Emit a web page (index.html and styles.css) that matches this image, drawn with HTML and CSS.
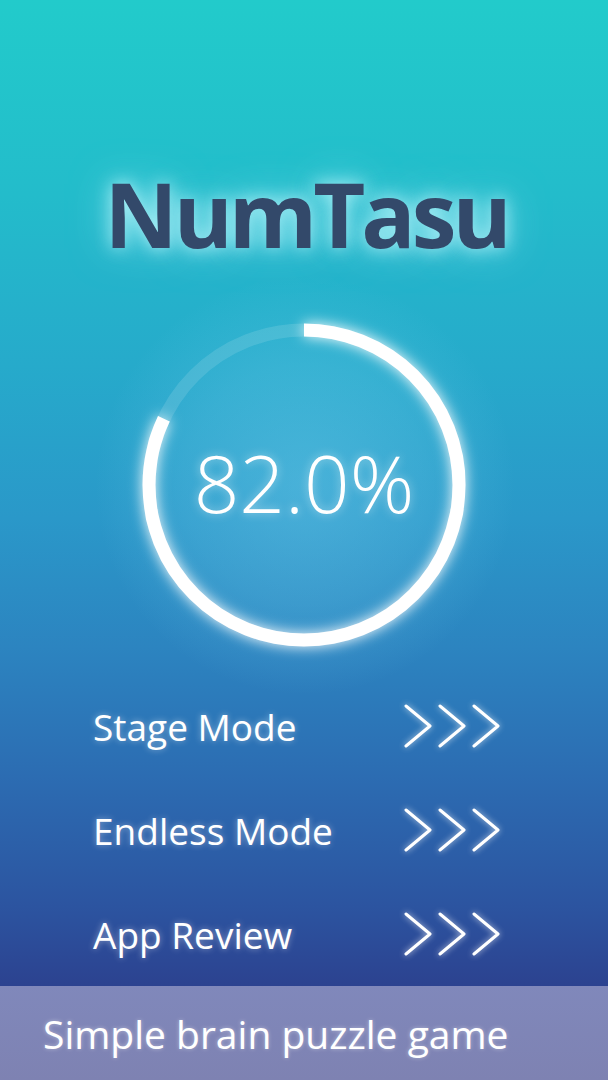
FILE: index.html
```html
<!DOCTYPE html>
<html lang="en">
<head>
<meta charset="utf-8">
<title>NumTasu</title>
<link rel="stylesheet" href="styles.css">
</head>
<body>
<div class="screen">
  <header class="title-wrap">
    <h1 class="title">NumTasu</h1>
  </header>
  <section class="gauge">
    <svg class="ring" viewBox="0 0 340 340" width="340" height="340" aria-hidden="true">
      <defs>
        <filter id="glow" x="-20%" y="-20%" width="140%" height="140%">
          <feGaussianBlur stdDeviation="7" result="b"/>
          <feMerge><feMergeNode in="b"/><feMergeNode in="SourceGraphic"/></feMerge>
        </filter>
      </defs>
      <circle class="track" cx="170" cy="170" r="155"/>
      <circle class="progress" cx="170" cy="170" r="155" filter="url(#glow)"
        stroke-dasharray="798.6 973.9" transform="rotate(-90 170 170)"/>
    </svg>
    <div class="pct">82.0%</div>
  </section>
  <nav class="menu">
    <a class="item" href="#">
      <span class="label">Stage Mode</span>
      <svg class="chev" viewBox="0 0 98 46" width="98" height="46" aria-hidden="true">
        <polyline points="3,3 27,23 3,43"/><polyline points="37,3 61,23 37,43"/><polyline points="71,3 95,23 71,43"/>
      </svg>
    </a>
    <a class="item" href="#">
      <span class="label">Endless Mode</span>
      <svg class="chev" viewBox="0 0 98 46" width="98" height="46" aria-hidden="true">
        <polyline points="3,3 27,23 3,43"/><polyline points="37,3 61,23 37,43"/><polyline points="71,3 95,23 71,43"/>
      </svg>
    </a>
    <a class="item" href="#">
      <span class="label">App Review</span>
      <svg class="chev" viewBox="0 0 98 46" width="98" height="46" aria-hidden="true">
        <polyline points="3,3 27,23 3,43"/><polyline points="37,3 61,23 37,43"/><polyline points="71,3 95,23 71,43"/>
      </svg>
    </a>
  </nav>
  <footer class="tagline">Simple brain puzzle game</footer>
</div>
</body>
</html>
```

FILE: styles.css
```css
* { box-sizing: border-box; }
html, body { margin: 0; padding: 0; }
body {
  width: 608px;
  height: 1080px;
  overflow: hidden;
  font-family: "Open Sans", "Noto Sans", sans-serif;
}
.screen {
  width: 608px;
  height: 1080px;
  display: flex;
  flex-direction: column;
  background:
    radial-gradient(circle at 305px 485px, rgba(120, 210, 240, 0.4) 0, rgba(120, 210, 240, 0.22) 120px, rgba(120, 210, 240, 0) 210px),
    linear-gradient(180deg, #22cbcb 0%, #23bccb 18%, #26aacb 34%, #2a98c9 48%, #2c84c0 60%, #2c6cb2 72%, #2c54a0 84%, #2c3e8c 93%, #2c3886 100%);
}
.title-wrap {
  padding-top: 167px;
  display: flex;
  justify-content: center;
}
.title {
  margin: 0;
  font-family: "Open Sans", sans-serif;
  font-weight: 700;
  font-size: 90px;
  line-height: 92px;
  letter-spacing: -4px;
  padding-left: 4px;
  color: #33496a;
  text-shadow: 0 0 18px rgba(200, 250, 255, 0.85), 0 0 40px rgba(170, 240, 255, 0.6);
}
.gauge {
  margin-top: 56px;
  display: grid;
  justify-items: center;
  align-items: center;
}
.ring, .pct { grid-area: 1 / 1; }
.ring { display: block; overflow: visible; }
.track {
  fill: none;
  stroke: rgba(255, 255, 255, 0.12);
  stroke-width: 13;
}
.progress {
  fill: none;
  stroke: #ffffff;
  stroke-width: 13;
}
.pct {
  font-family: "Open Sans", sans-serif;
  font-weight: 300;
  font-size: 80px;
  color: #ffffff;
  text-shadow: 0 0 10px rgba(255, 255, 255, 0.5);
  padding-bottom: 8px;
}
.menu {
  margin-top: 19px;
  display: flex;
  flex-direction: column;
}
.item {
  height: 104px;
  display: flex;
  align-items: center;
  justify-content: space-between;
  padding: 0 107px 0 93px;
  text-decoration: none;
  color: #ffffff;
}
.label {
  font-size: 37px;
  font-weight: 400;
  text-shadow: 0 0 6px rgba(255, 255, 255, 0.45);
}
.chev polyline {
  fill: none;
  stroke: #ffffff;
  stroke-width: 3;
  stroke-linecap: round;
  stroke-linejoin: round;
}
.chev { filter: drop-shadow(0 0 3px rgba(255, 255, 255, 0.7)); }
.tagline {
  margin-top: auto;
  height: 97px;
  background: linear-gradient(180deg, #8088bb 0%, #7e82b2 100%);
  color: #ffffff;
  font-size: 39px;
  display: flex;
  align-items: center;
  padding-left: 43px;
  text-shadow: 0 0 4px rgba(255, 255, 255, 0.4);
}
```
